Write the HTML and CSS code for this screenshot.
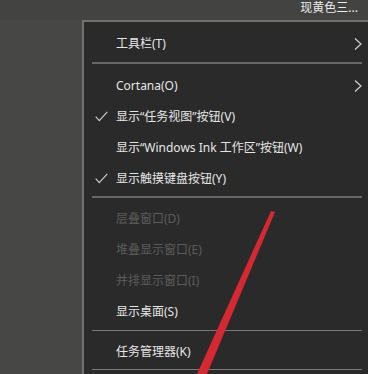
FILE: index.html
```html
<!DOCTYPE html>
<html lang="zh">
<head>
<meta charset="utf-8">
<link rel="stylesheet" href="styles.css">
</head>
<body>
<div class="page">
  <div class="topbar"><span class="toptext">现黄色三...</span></div>
  <div class="menu">
    <div class="item item-first"><span class="check"></span><span class="label">工具栏(T)</span><span class="sub"><svg width="8" height="12" viewBox="0 0 8 12"><path d="M1 0.5 L7 6 L1 11.5" fill="none" stroke="#d0d0d0" stroke-width="1.2"/></svg></span></div>
    <div class="sep sep-1"></div>
    <div class="item"><span class="check"></span><span class="label">Cortana(O)</span><span class="sub"><svg width="8" height="12" viewBox="0 0 8 12"><path d="M1 0.5 L7 6 L1 11.5" fill="none" stroke="#d0d0d0" stroke-width="1.2"/></svg></span></div>
    <div class="item"><span class="check"><svg width="13" height="11" viewBox="0 0 13 11"><path d="M0.7 5.6 L4.3 9.6 L12.3 0.8" fill="none" stroke="#cfcfcf" stroke-width="1.1"/></svg></span><span class="label">显示“任务视图”按钮(V)</span></div>
    <div class="item"><span class="check"></span><span class="label">显示“Windows Ink 工作区”按钮(W)</span></div>
    <div class="item"><span class="check"><svg width="13" height="11" viewBox="0 0 13 11"><path d="M0.7 5.6 L4.3 9.6 L12.3 0.8" fill="none" stroke="#cfcfcf" stroke-width="1.1"/></svg></span><span class="label">显示触摸键盘按钮(Y)</span></div>
    <div class="sep sep-2"></div>
    <div class="item disabled"><span class="check"></span><span class="label">层叠窗口(D)</span></div>
    <div class="item disabled"><span class="check"></span><span class="label">堆叠显示窗口(E)</span></div>
    <div class="item disabled"><span class="check"></span><span class="label">并排显示窗口(I)</span></div>
    <div class="item"><span class="check"></span><span class="label">显示桌面(S)</span></div>
    <div class="sep sep-3"></div>
    <div class="item"><span class="check"></span><span class="label">任务管理器(K)</span></div>
    <div class="sep sep-4"></div>
  </div>
  <svg class="arrow" width="368" height="374" viewBox="0 0 368 374"><polygon points="271,211 275,212 207,374 197,374" fill="#d42833"/></svg>
</div>
</body>
</html>
```

FILE: styles.css
```css
html, body {
  margin: 0;
  padding: 0;
  overflow: hidden;
}
body {
  width: 368px;
  height: 374px;
  background: #474745;
  font-family: "Noto Sans", "Noto Sans CJK SC", sans-serif;
  font-size: 12px;
}
.page {
  position: relative;
  width: 368px;
  height: 374px;
  overflow: hidden;
}
.topbar {
  height: 20px;
  background: #434342;
  display: flex;
  justify-content: flex-end;
  align-items: flex-start;
  padding-right: 10px;
  box-sizing: border-box;
}
.toptext {
  color: #ececec;
  font-size: 12px;
  line-height: 14px;
  padding-top: 1px;
}
.menu {
  margin-left: 82px;
  width: 290px;
  height: 354px;
  background: #2a2a2a;
  border-top: 2px solid #707070;
  border-left: 2px solid #707070;
  padding-top: 6px;
  box-sizing: border-box;
}
.item {
  height: 31px;
  display: flex;
  align-items: center;
  color: #e6e6e6;
  padding-right: 10px;
}
.item.disabled {
  color: #5c5c5c;
}
.check {
  width: 32px;
  flex: none;
  display: flex;
  align-items: center;
  padding-left: 11px;
  box-sizing: border-box;
}
.check svg {
  display: block;
}
.label {
  flex: 1;
  white-space: nowrap;
  line-height: 16px;
}
.sub {
  flex: none;
  display: flex;
  align-items: center;
}
.sub svg {
  display: block;
}
.sep {
  height: 2px;
  background: #676767;
  margin-left: 8px;
  margin-right: 10px;
}
.sep-1 {
  margin-top: 3px;
  margin-bottom: 6px;
}
.sep-2 {
  margin-top: 2px;
  margin-bottom: 5px;
}
.sep-3 {
  margin-top: 3px;
  margin-bottom: 5px;
  height: 1px;
  background: #7a7a7a;
}
.sep-4 {
  margin-top: 2px;
  height: 1px;
  background: #7a7a7a;
}
.arrow {
  position: absolute;
  left: 0;
  top: 0;
  pointer-events: none;
}
```
